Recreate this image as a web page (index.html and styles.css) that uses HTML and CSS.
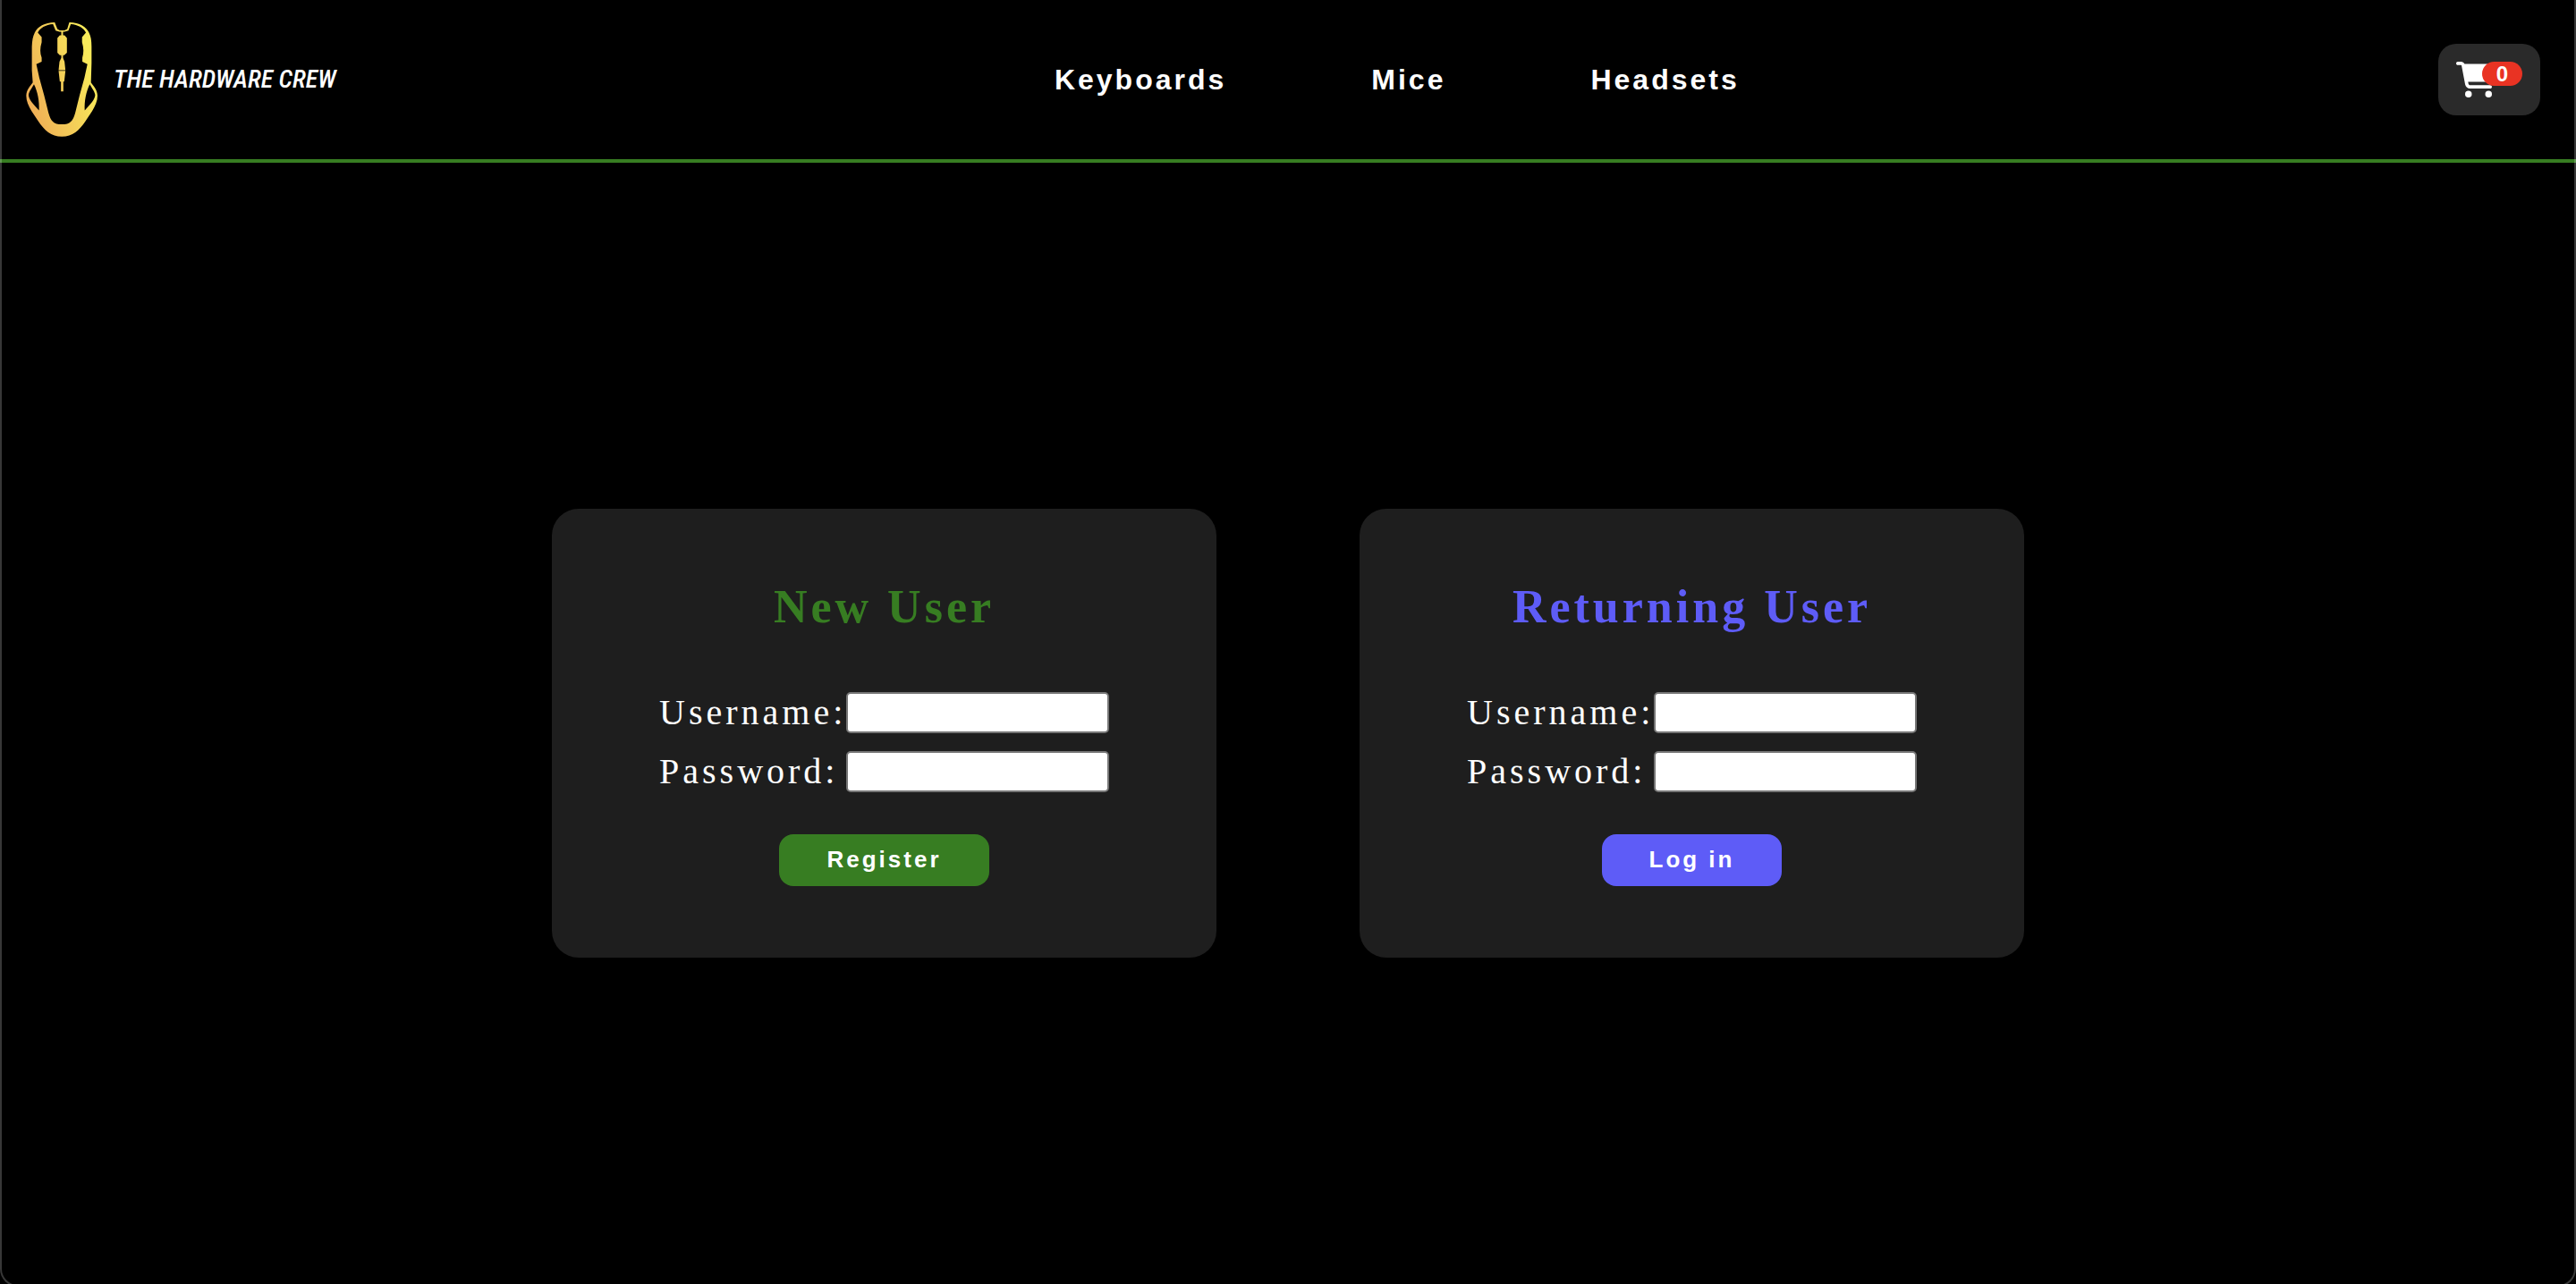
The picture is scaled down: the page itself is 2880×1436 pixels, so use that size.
FILE: index.html
```html
<!DOCTYPE html>
<html lang="en">
<head>
<meta charset="utf-8">
<meta name="viewport" content="width=device-width, initial-scale=1">
<title>The Hardware Crew</title>
<link rel="stylesheet" href="styles.css">
</head>
<body>
<header class="site-header">
  <a class="brand" href="#">
    <svg class="brand-mark" viewBox="57 43 241 386" aria-hidden="true">
      <defs>
        <linearGradient id="gold" gradientUnits="userSpaceOnUse" x1="65" y1="300" x2="290" y2="235">
          <stop offset="0" stop-color="#f0b056"/>
          <stop offset="1" stop-color="#f8ea5a"/>
        </linearGradient>
      </defs>
      <g fill="url(#gold)">
        <path fill-rule="evenodd" d="M154 43L163 66L171 70L187 70L196 66L203 43C238 43 262 60 269 77C276 90 278 105 278 125V180L276 246C284 258 297 270 298 290C298 308 290 324 280 342L256 378C238 405 214 428 178 428C142 428 118 405 100 378L76 342C66 324 58 308 58 290C59 270 72 258 80 246L77 205V125C78 105 80 90 87 77C96 58 120 43 154 43ZM148 49C124 50 103 63 97 78L110 93V110C104 130 104 146 110 162V176L92 184L102 230L118 288L133 348C140 374 150 387 178 387C206 387 216 374 223 348L238 288L254 230L264 184L247 176V162C252 146 252 130 246 110V93L259 78C253 63 232 50 208 49L200 71L187 75H170L157 71ZM84 252C78 264 66 278 66 289C67 303 80 318 101 340C103 310 96 275 84 252ZM272 252C260 275 253 310 255 340C276 318 289 303 290 289C290 278 278 264 272 252Z"/>
        <path d="M176 73H182V87H187L195 96V146L186 154H182V163L187 176L190 204H167L170 176L176 163V154H171L163 146V96L171 87H176ZM167 207H190L186 243H183V276H175V243H171Z"/>
      </g>
    </svg>
    <span class="brand-name">THE HARDWARE CREW</span>
  </a>
  <nav class="site-nav">
    <a href="#">Keyboards</a>
    <a href="#">Mice</a>
    <a href="#">Headsets</a>
  </nav>
  <button class="cart" type="button" aria-label="Shopping cart">
    <svg class="cart-icon" viewBox="0 0 576 512" aria-hidden="true"><path fill="#fff" d="M0 24C0 10.7 10.7 0 24 0H69.5c22 0 41.5 12.8 50.6 32h411c26.3 0 45.5 25 38.6 50.4l-41 152.3c-8.5 31.4-37 53.3-69.5 53.3H170.7l5.4 28.5c2.2 11.3 12.1 19.5 23.6 19.5H488c13.3 0 24 10.7 24 24s-10.7 24-24 24H199.7c-34.6 0-64.3-24.6-70.7-58.5L77.4 54.5c-.7-3.8-4-6.5-7.9-6.5H24C10.7 48 0 37.3 0 24zM128 464a48 48 0 1 1 96 0 48 48 0 1 1-96 0zm336-48a48 48 0 1 1 0 96 48 48 0 1 1 0-96z"/></svg>
    <span class="cart-count">0</span>
  </button>
</header>
<main class="accounts">
  <form class="card card-new">
    <h1 class="card-title">New User</h1>
    <div class="fields">
      <label for="new-username">Username:</label>
      <input id="new-username" type="text">
      <label for="new-password">Password:</label>
      <input id="new-password" type="password">
    </div>
    <button class="submit" type="button">Register</button>
  </form>
  <form class="card card-returning">
    <h1 class="card-title">Returning User</h1>
    <div class="fields">
      <label for="username">Username:</label>
      <input id="username" type="text">
      <label for="password">Password:</label>
      <input id="password" type="password">
    </div>
    <button class="submit" type="button">Log in</button>
  </form>
</main>
</body>
</html>
```
FILE: styles.css
```css
* {
  box-sizing: border-box;
}

body {
  display: flex;
  flex-direction: column;
  min-height: 100vh;
  margin: 0;
  background: #000;
  color: #fff;
  font-family: "Liberation Serif", "Times New Roman", serif;
}

/* Thin rounded frame over the window edges */
body::after {
  content: "";
  position: fixed;
  inset: 0 0 -3px;
  border: 2px solid rgba(255, 255, 255, 0.22);
  border-top: 0;
  border-radius: 0 0 20px 20px;
  pointer-events: none;
}

.site-header {
  display: flex;
  align-items: center;
  justify-content: space-between;
  padding: 24px 40px 24px 29px;
  border-bottom: 4px solid #377d22;
}

.brand {
  display: flex;
  align-items: center;
  gap: 18px;
  padding-right: 22px;
  color: #fff;
  text-decoration: none;
}

.brand-mark {
  width: 80px;
  height: 130px;
}

.brand-name {
  font: italic 500 28px/32px "Roboto Condensed", "Liberation Sans Narrow", "Liberation Sans", sans-serif;
  white-space: nowrap;
}

.site-nav {
  display: flex;
  gap: 162px;
}

.site-nav a {
  color: #fff;
  font: bold 32px/36px "Liberation Sans", Arial, sans-serif;
  letter-spacing: 3px;
  text-decoration: none;
}

.cart {
  display: flex;
  align-items: flex-start;
  padding: 20px;
  border: 0;
  border-radius: 20px;
  background: #2a2a2a;
  color: #fff;
}

.cart-icon {
  width: 45px;
  height: 40px;
}

.cart-count {
  width: 45px;
  margin-left: -16px;
  border-radius: 14px;
  background: #e93323;
  font: bold 24px/27px "Liberation Sans", Arial, sans-serif;
  text-align: center;
}

.accounts {
  display: flex;
  flex: 1;
  align-items: center;
  justify-content: center;
  gap: 160px;
  padding-top: 22px;
}

.card {
  display: flex;
  flex-direction: column;
  align-items: center;
  padding: 80px 120px;
  border-radius: 30px;
  background: #1e1e1e;
  letter-spacing: 4px;
}

.card-title {
  margin: 0 0 65px;
  font-size: 52px;
  line-height: 60px;
}

.card-new .card-title {
  color: #377d22;
}

.card-returning .card-title {
  color: #5e5cf7;
}

.fields {
  display: grid;
  grid-template-columns: 209px 294px;
  row-gap: 20px;
  margin-bottom: 47px;
  font-size: 40px;
  line-height: 46px;
}

.fields input {
  width: 100%;
  height: 46px;
  padding: 2px 4px;
  border: 2px solid #767676;
  border-radius: 5px;
  background: #fff;
  font-size: 26px;
}

.submit {
  height: 58px;
  padding: 0 53px 2px;
  border: 0;
  border-radius: 16px;
  color: #fff;
  font: bold 26px/30px "Liberation Sans", Arial, sans-serif;
  letter-spacing: 3px;
}

.card-new .submit {
  background: #377d22;
}

.card-returning .submit {
  background: #5e5cf7;
}
```
